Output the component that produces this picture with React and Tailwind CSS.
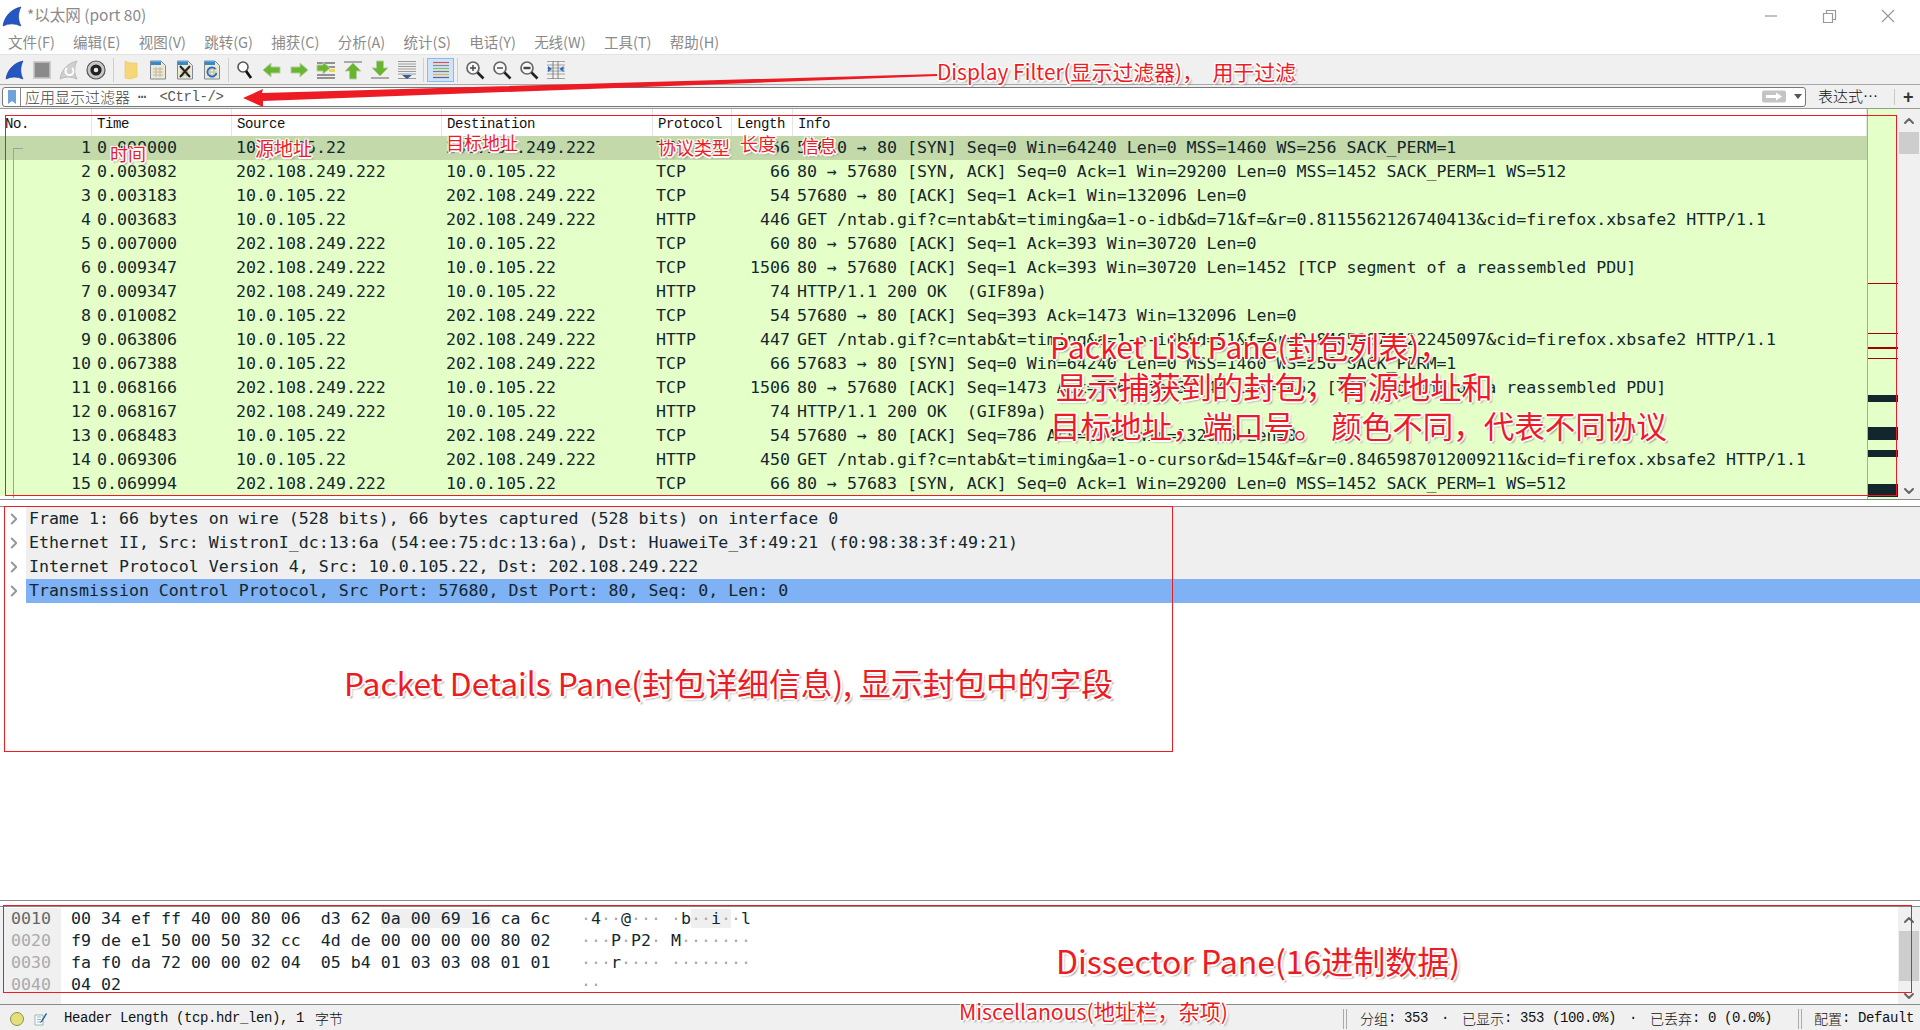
import { ChevronUp, ChevronDown, ChevronRight } from 'lucide-react';

const packets = [
  ['1', '0.000000', '10.0.105.22', '202.108.249.222', 'TCP', '66', '57680 → 80 [SYN] Seq=0 Win=64240 Len=0 MSS=1460 WS=256 SACK_PERM=1'],
  ['2', '0.003082', '202.108.249.222', '10.0.105.22', 'TCP', '66', '80 → 57680 [SYN, ACK] Seq=0 Ack=1 Win=29200 Len=0 MSS=1452 SACK_PERM=1 WS=512'],
  ['3', '0.003183', '10.0.105.22', '202.108.249.222', 'TCP', '54', '57680 → 80 [ACK] Seq=1 Ack=1 Win=132096 Len=0'],
  ['4', '0.003683', '10.0.105.22', '202.108.249.222', 'HTTP', '446', 'GET /ntab.gif?c=ntab&t=timing&a=1-o-idb&d=71&f=&r=0.8115562126740413&cid=firefox.xbsafe2 HTTP/1.1'],
  ['5', '0.007000', '202.108.249.222', '10.0.105.22', 'TCP', '60', '80 → 57680 [ACK] Seq=1 Ack=393 Win=30720 Len=0'],
  ['6', '0.009347', '202.108.249.222', '10.0.105.22', 'TCP', '1506', '80 → 57680 [ACK] Seq=1 Ack=393 Win=30720 Len=1452 [TCP segment of a reassembled PDU]'],
  ['7', '0.009347', '202.108.249.222', '10.0.105.22', 'HTTP', '74', 'HTTP/1.1 200 OK  (GIF89a)'],
  ['8', '0.010082', '10.0.105.22', '202.108.249.222', 'TCP', '54', '57680 → 80 [ACK] Seq=393 Ack=1473 Win=132096 Len=0'],
  ['9', '0.063806', '10.0.105.22', '202.108.249.222', 'HTTP', '447', 'GET /ntab.gif?c=ntab&t=timing&a=1-o-idb&d=51&f=&r=0.84659870122245097&cid=firefox.xbsafe2 HTTP/1.1'],
  ['10', '0.067388', '10.0.105.22', '202.108.249.222', 'TCP', '66', '57683 → 80 [SYN] Seq=0 Win=64240 Len=0 MSS=1460 WS=256 SACK_PERM=1'],
  ['11', '0.068166', '202.108.249.222', '10.0.105.22', 'TCP', '1506', '80 → 57680 [ACK] Seq=1473 Ack=786 Win=31744 Len=1452 [TCP segment of a reassembled PDU]'],
  ['12', '0.068167', '202.108.249.222', '10.0.105.22', 'HTTP', '74', 'HTTP/1.1 200 OK  (GIF89a)'],
  ['13', '0.068483', '10.0.105.22', '202.108.249.222', 'TCP', '54', '57680 → 80 [ACK] Seq=786 Ack=2945 Win=132096 Len=0'],
  ['14', '0.069306', '10.0.105.22', '202.108.249.222', 'HTTP', '450', 'GET /ntab.gif?c=ntab&t=timing&a=1-o-cursor&d=154&f=&r=0.8465987012009211&cid=firefox.xbsafe2 HTTP/1.1'],
  ['15', '0.069994', '202.108.249.222', '10.0.105.22', 'TCP', '66', '80 → 57683 [SYN, ACK] Seq=0 Ack=1 Win=29200 Len=0 MSS=1452 SACK_PERM=1 WS=512'],
];

const details = [
  'Frame 1: 66 bytes on wire (528 bits), 66 bytes captured (528 bits) on interface 0',
  'Ethernet II, Src: WistronI_dc:13:6a (54:ee:75:dc:13:6a), Dst: HuaweiTe_3f:49:21 (f0:98:38:3f:49:21)',
  'Internet Protocol Version 4, Src: 10.0.105.22, Dst: 202.108.249.222',
  'Transmission Control Protocol, Src Port: 57680, Dst Port: 80, Seq: 0, Len: 0',
];

const menus = ['文件(F)', '编辑(E)', '视图(V)', '跳转(G)', '捕获(C)', '分析(A)', '统计(S)', '电话(Y)', '无线(W)', '工具(T)', '帮助(H)'];

const MONO = "font-['DejaVu_Sans_Mono',monospace] text-[16.6px] text-[#12272e] whitespace-pre";
const SIMSUN = "font-['Liberation_Mono',monospace] text-[14px] tracking-[-0.4px] text-[#111] whitespace-pre";
const CJK = "font-['Noto_Sans_CJK_SC',sans-serif]";

function Fin({ fill = '#2456c4', dark = '#16348c' }) {
  return <path d="M1 19 C2 11 8 3 18 1 C15 7 15 13 18 19 Q9 15 1 19 Z" fill={fill} stroke={dark} strokeWidth="0.6" />;
}

function Doc({ children }) {
  return (
    <>
      <path d="M2.5 1 H13 L17.5 5.5 V19 H2.5 Z" fill="#efe9d4" stroke="#7d8a96" />
      <path d="M3 1.5 H13 V5 H3 Z" fill="#2f8ad0" />
      <path d="M5 9 H15 M5 12 H15 M5 15 H15 M8 7 V17 M12 7 V17" stroke="#b5ad92" strokeWidth="0.8" />
      {children}
    </>
  );
}

function Lens({ children }) {
  return (
    <>
      <circle cx="8" cy="8" r="6" fill="#f7f7f7" stroke="#666" strokeWidth="1.7" />
      <path d="M12.5 12.5 L18.5 18.5" stroke="#222" strokeWidth="2.6" />
      {children}
    </>
  );
}

function Arrow({ d }) {
  return <path d={d} fill="#68b52e" stroke="#b9c9a8" strokeWidth="1" />;
}

const toolIcons = {
  start: <Fin />,
  stop: <rect x="2" y="2" width="16" height="16" fill="#8a8a8a" stroke="#c4c4c4" strokeWidth="1.6" />,
  restart: (
    <>
      <Fin fill="#cfcfcf" dark="#a5a5a5" />
      <path d="M13 8 A4 4 0 1 1 8 8" fill="none" stroke="#fff" strokeWidth="2" />
    </>
  ),
  options: (
    <>
      <circle cx="10" cy="10" r="9" fill="#c8c8c8" stroke="#555" strokeWidth="1.2" />
      <circle cx="10" cy="10" r="5.6" fill="#222" />
      <circle cx="10" cy="10" r="2.3" fill="#e8e8e8" />
    </>
  ),
  folder: <path d="M4 1 L9 3 L16 3 V17 L9 19 L4 18 Z" fill="#f5d778" stroke="#e8c660" strokeWidth="0.6" />,
  file: <Doc />,
  close: (
    <Doc>
      <path d="M5 6 L15 17 M15 6 L5 17" stroke="#222" strokeWidth="2" />
    </Doc>
  ),
  reload: (
    <Doc>
      <path d="M13.5 9 A4.6 4.6 0 1 0 14.5 13" fill="none" stroke="#1f6fbe" strokeWidth="1.8" />
    </Doc>
  ),
  find: (
    <>
      <circle cx="8" cy="7" r="5" fill="#fff" stroke="#555" strokeWidth="1.6" />
      <path d="M11 11 L16 18" stroke="#111" strokeWidth="2.8" />
    </>
  ),
  back: <Arrow d="M1 10 L9 3 V7 H18 V13 H9 V17 Z" />,
  forward: <Arrow d="M19 10 L11 3 V7 H2 V13 H11 V17 Z" />,
  goto: (
    <>
      <path d="M1 3 H19 M9 7 H19 M1 15 H19 M1 18 H19" stroke="#333" strokeWidth="1.2" />
      <path d="M13 9 H19 V12 H13 Z" fill="#f1d64a" />
      <Arrow d="M14 8 L7 2 V5 H1 V11 H7 V14 Z" />
    </>
  ),
  top: (
    <>
      <path d="M1 2 H19" stroke="#999" strokeWidth="1.6" />
      <Arrow d="M10 3 L18 11 H13.5 V19 H6.5 V11 H2 Z" />
    </>
  ),
  bottom: (
    <>
      <path d="M1 18 H19" stroke="#999" strokeWidth="1.6" />
      <Arrow d="M10 16 L18 8 H13.5 V1 H6.5 V8 H2 Z" />
    </>
  ),
  autoscroll: (
    <>
      <path d="M1 1.5 H19 M1 4 H19 M1 6.5 H19 M1 9 H19 M1 11.5 H19 M1 14 H19 M1 18.5 H19" stroke="#8f8f8f" strokeWidth="0.9" />
      <path d="M5 15 H15 L10 19 Z" fill="#2f5f9e" />
    </>
  ),
  colorize: (
    <>
      <path d="M2 2.5 H18" stroke="#d9534f" strokeWidth="1.2" />
      <path d="M2 5.5 H18" stroke="#8b8b8b" strokeWidth="1.2" />
      <path d="M2 8.5 H18" stroke="#8cc152" strokeWidth="1.2" />
      <path d="M2 11.5 H18" stroke="#7a7a7a" strokeWidth="1.2" />
      <path d="M2 14.5 H18" stroke="#e0b93c" strokeWidth="1.2" />
      <path d="M2 17.5 H18" stroke="#6b5b95" strokeWidth="1.2" />
    </>
  ),
  zoomIn: (
    <Lens>
      <path d="M5 8 H11 M8 5 V11" stroke="#444" strokeWidth="1.4" />
    </Lens>
  ),
  zoomOut: (
    <Lens>
      <path d="M5 8 H11" stroke="#444" strokeWidth="1.4" />
    </Lens>
  ),
  zoom100: (
    <Lens>
      <path d="M4.5 8 H11.5" stroke="#444" strokeWidth="2.4" />
    </Lens>
  ),
  resize: (
    <>
      <path d="M1 1.5 H19 M1 5 H19 M1 8 H19 M1 11 H19 M1 14 H19 M1 18.5 H19" stroke="#9a9a9a" strokeWidth="0.9" />
      <path d="M7 1 V19 M12 1 V19" stroke="#777" strokeWidth="0.9" />
      <path d="M2 6 L6 9 L2 12 Z M17.5 6 L13.5 9 L17.5 12 Z" fill="#2f6fb8" />
    </>
  ),
};

function Tool({ name, active }) {
  return (
    <div className={`w-[27px] h-[24px] flex items-center justify-center shrink-0 ${active ? 'bg-[#cfe4f9] border border-[#84bcef]' : ''}`}>
      <svg viewBox="0 0 20 20" className="w-[20px] h-[20px]">{toolIcons[name]}</svg>
    </div>
  );
}

function Sep({ className }) {
  return <div className={`w-px h-[24px] bg-[#cfcfcf] shrink-0 ${className}`} />;
}

function Toolbar() {
  return (
    <div className="h-[30px] shrink-0 flex items-center pl-px bg-[#f0f0f0] border-b border-[#a8a8a8]">
      <Tool name="start" />
      <Tool name="stop" />
      <Tool name="restart" />
      <Tool name="options" />
      <Sep className="ml-[4px] mr-[3px]" />
      <Tool name="folder" />
      <Tool name="file" />
      <Tool name="close" />
      <Tool name="reload" />
      <Sep className="ml-[3px] mr-[2px]" />
      <Tool name="find" />
      <Tool name="back" />
      <Tool name="forward" />
      <Tool name="goto" />
      <Tool name="top" />
      <Tool name="bottom" />
      <Tool name="autoscroll" />
      <Sep className="ml-[3px] mr-[3px]" />
      <Tool name="colorize" active />
      <Sep className="ml-[3px] mr-[3px]" />
      <Tool name="zoomIn" />
      <Tool name="zoomOut" />
      <Tool name="zoom100" />
      <Tool name="resize" />
    </div>
  );
}

function FilterBar() {
  return (
    <div className="h-[24px] shrink-0 flex items-center bg-[#f0f0f0] border-b border-[#9a9a9a]">
      <div className="ml-[2px] w-[1804px] h-[20px] flex items-center bg-white border border-[#777] rounded-[3px]">
        <div className="w-[18px] h-full flex items-center justify-center border-r border-[#888]">
          <svg viewBox="0 0 8 14" className="w-[8px] h-[14px]">
            <path d="M0 0 H8 V14 L4 11 L0 14 Z" fill="#6ea2d8" />
          </svg>
        </div>
        <span className={`ml-[4px] pt-px text-[15px] font-light text-[#444] ${CJK}`}>应用显示过滤器</span>
        <span className="ml-[8px] pt-px font-['Liberation_Mono',monospace] text-[14px] text-[#555]">⋯</span>
        <span className="ml-[13px] pt-px font-['Liberation_Mono',monospace] text-[14px] tracking-[-0.4px] text-[#555] whitespace-pre">{'<Ctrl-/>'}</span>
        <svg viewBox="0 0 24 12" className="ml-auto mr-[8px] w-[24px] h-[13px]">
          <rect width="24" height="12" rx="2" fill="#c4c4c4" />
          <path d="M4 4.5 H14 V2 L20 6 L14 10 V7.5 H4 Z" fill="#fff" />
        </svg>
        <svg viewBox="0 0 8 5" className="mr-[3px] w-[8px] h-[5px]">
          <path d="M0 0 H8 L4 5 Z" fill="#555" />
        </svg>
      </div>
      <span className={`ml-[12px] text-[15px] font-light text-[#111] whitespace-pre ${CJK}`}>表达式⋯</span>
      <div className="ml-[16px] w-px h-[16px] bg-[#c8c8c8]" />
      <span className="ml-[8px] font-['Liberation_Sans',sans-serif] text-[18px] font-bold leading-none text-[#333]">+</span>
    </div>
  );
}

const LIST_COLS = 'grid grid-cols-[92px_140px_210px_211px_79px_61px_1fr]';

function PacketHeader() {
  const heads = ['No.', 'Time', 'Source', 'Destination', 'Protocol', 'Length', 'Info'];
  return (
    <div className={`${LIST_COLS} h-[27px] items-center bg-white`}>
      {heads.map((h) => (
        <div key={h} className={`h-full flex items-center pt-[3px] pl-[5px] border-r border-[#e5e5e5] ${SIMSUN}`}>{h}</div>
      ))}
    </div>
  );
}

function PacketRow({ row, selected }) {
  return (
    <div className={`${LIST_COLS} h-[24px] items-center overflow-hidden ${MONO} ${selected ? 'bg-[#c3d9a9]' : 'bg-[#e4ffc7]'}`}>
      <div className="text-right pr-px">{row[0]}</div>
      <div className="pl-[5px]">{row[1]}</div>
      <div className="pl-[4px]">{row[2]}</div>
      <div className="pl-[4px]">{row[3]}</div>
      <div className="pl-[3px]">{row[4]}</div>
      <div className="text-right pr-[3px] -ml-[20px]">{row[5]}</div>
      <div className="pl-[4px]">{row[6]}</div>
    </div>
  );
}

function Minimap() {
  return (
    <div className="w-[31px] shrink-0 flex flex-col bg-[#e4ffc7] border-l border-[#aaa]">
      <div className="h-[175px] shrink-0 border-b border-[#a50000]" />
      <div className="h-[50px] shrink-0 border-b border-[#a50000]" />
      <div className="h-[15px] shrink-0 border-b-2 border-[#a50000]" />
      <div className="h-[10px] shrink-0 border-b border-[#a50000]" />
      <div className="h-[36px] shrink-0" />
      <div className="h-[7px] shrink-0 bg-[#12262e]" />
      <div className="h-[25px] shrink-0" />
      <div className="h-[13px] shrink-0 bg-[#12262e]" />
      <div className="h-[10px] shrink-0" />
      <div className="h-[7px] shrink-0 bg-[#12262e]" />
      <div className="h-[27px] shrink-0" />
      <div className="h-[13px] shrink-0 bg-[#12262e]" />
    </div>
  );
}

function Scrollbar({ thumbClass, arrowClass }) {
  return (
    <div className="w-[22px] shrink-0 flex flex-col items-center bg-[#f0f0f0]">
      <ChevronUp size={16} strokeWidth={3} className={`text-[#666] shrink-0 ${arrowClass}`} />
      <div className={`w-[20px] bg-[#cdcdcd] shrink-0 ${thumbClass}`} />
      <div className="flex-1" />
      <ChevronDown size={16} strokeWidth={3} className="text-[#666] shrink-0" />
    </div>
  );
}

function PacketList() {
  return (
    <div className="relative h-[391px] shrink-0 flex border-b border-[#8a8a8a] bg-white">
      <div className="flex-1 min-w-0 overflow-hidden">
        <PacketHeader />
        {packets.map((row, i) => (
          <PacketRow key={row[0]} row={row} selected={i === 0} />
        ))}
      </div>
      <Minimap />
      <Scrollbar thumbClass="h-[22px]" arrowClass="mt-[4px] mb-[3px]" />
      <div className="absolute left-[13px] top-[39px] w-[10px] h-[350px] border-l border-t border-[#9aa3a8]" />
    </div>
  );
}

function DetailsPane() {
  return (
    <div className="h-[395px] shrink-0 mt-[6px] bg-white border-t border-b border-[#8a8a8a]">
      {details.map((text, i) => (
        <div key={text} className="h-[24px] flex items-center">
          <div className="w-[26px] shrink-0 flex justify-center pl-[1px] bg-white">
            <ChevronRight size={18} strokeWidth={2.6} className="text-[#999]" />
          </div>
          <div className={`flex-1 h-full flex items-center pl-[3px] pt-px ${MONO} ${i === 3 ? 'bg-[#7fb2f5]' : 'bg-[#efefef]'}`}>{text}</div>
        </div>
      ))}
    </div>
  );
}

function Ascii({ text }) {
  return [...text].map((c, i) => (
    <span key={i} className={c === '·' ? 'text-[#a8a8a8]' : ''}>{c}</span>
  ));
}

function HexRow({ offset, dim, children, ascii }) {
  return (
    <div className="h-[22px] flex items-center">
      <div className={`w-[61px] h-full shrink-0 flex items-center pl-[11px] bg-[#f0f0f0] ${MONO} ${dim ? '!text-[#aaa]' : '!text-[#666]'}`}>{offset}</div>
      <div className={`w-[520px] shrink-0 pl-[10px] ${MONO}`}>{children}</div>
      <div className={MONO}>{ascii}</div>
    </div>
  );
}

function HexPane() {
  const hl = 'bg-[#efefef]';
  return (
    <div className="h-[99px] shrink-0 mt-[5px] flex bg-white border-t border-b border-[#8a8a8a]">
      <div className="flex-1 flex flex-col">
        <div className="flex flex-col pt-[1px]">
          <HexRow
            offset="0010"
            ascii={
              <>
                <Ascii text="·4··@··· ·b" />
                <span className={hl}><Ascii text="··i·" /></span>
                <Ascii text="·l" />
              </>
            }
          >
            00 34 ef ff 40 00 80 06  d3 62 <span className={hl}>0a 00 69 16</span> ca 6c
          </HexRow>
          <HexRow offset="0020" dim ascii={<Ascii text="···P·P2· M·······" />}>f9 de e1 50 00 50 32 cc  4d de 00 00 00 00 80 02</HexRow>
          <HexRow offset="0030" dim ascii={<Ascii text="···r···· ········" />}>fa f0 da 72 00 00 02 04  05 b4 01 03 03 08 01 01</HexRow>
          <HexRow offset="0040" dim ascii={<Ascii text="··" />}>04 02</HexRow>
        </div>
        <div className="flex-1 w-[61px] bg-[#f0f0f0]" />
      </div>
      <Scrollbar thumbClass="h-[50px]" arrowClass="mt-[5px] mb-[3px]" />
    </div>
  );
}

function StatusBar() {
  return (
    <div className="flex-1 flex items-center pt-[2px] bg-[#f0f0f0]">
      <div className="ml-[10px] w-[14px] h-[14px] rounded-full bg-[#e3e07a] border border-[#8f8f50]" />
      <svg viewBox="0 0 14 14" className="ml-[10px] w-[14px] h-[14px]">
        <path d="M1 3 H9 V13 H1 Z" fill="#fff" stroke="#7aa" strokeWidth="0.8" />
        <path d="M3 5 H7 M3 7.5 H7 M3 10 H7" stroke="#89a" strokeWidth="0.8" />
        <path d="M12 1 L7 9 L6 11 L8 10 L13 2 Z" fill="#1f5f9e" />
      </svg>
      <span className={`ml-[16px] ${SIMSUN}`}>Header Length (tcp.hdr_len), 1</span>
      <span className={`ml-[11px] text-[14px] font-light text-[#111] ${CJK}`}>字节</span>
      <div className="ml-auto w-[4px] h-[20px] border-x border-[#aaa]" />
      <div className={`ml-[13px] w-[438px] flex items-center text-[14px] font-light text-[#111] ${CJK}`}>
        <span>分组</span>
        <span className={SIMSUN}>: 353</span>
        <span className={`ml-[13px] mr-[13px] ${SIMSUN}`}>·</span>
        <span>已显示</span>
        <span className={SIMSUN}>: 353 (100.0%)</span>
        <span className={`ml-[13px] mr-[13px] ${SIMSUN}`}>·</span>
        <span>已丢弃</span>
        <span className={SIMSUN}>: 0 (0.0%)</span>
      </div>
      <div className="w-[4px] h-[20px] border-x border-[#aaa]" />
      <div className={`ml-[12px] mr-[6px] flex items-center text-[14px] font-light text-[#111] ${CJK}`}>
        <span>配置</span>
        <span className={SIMSUN}>: Default</span>
      </div>
    </div>
  );
}

const NOTE = `absolute whitespace-pre leading-none text-[#ed1c24] ${CJK} [text-shadow:1px_1px_0_#fff,-1px_-1px_0_#fff,1px_-1px_0_#fff,-1px_1px_0_#fff,2px_0_0_#fff,0_2px_0_#fff,2px_2px_2px_#8f8f8f]`;

function Annotations() {
  return (
    <>
      <svg viewBox="0 0 1920 1030" className="absolute inset-0 w-[1920px] h-[1030px] pointer-events-none">
        <polygon points="243,98 263,89 262,93 937,74 937,76 263,101 263,107" fill="#ed1c24" />
      </svg>
      <div className="absolute left-[5px] top-[115px] w-[1892px] h-[381px] border border-[#ed1c24]" />
      <div className="absolute left-[4px] top-[506px] w-[1169px] h-[246px] border border-[#ed1c24]" />
      <div className="absolute left-[3px] top-[905px] w-[1909px] h-[88px] border border-[#ed1c24]" />
      <div className={`${NOTE} left-[937px] top-[61px] text-[20.9px]`}>Display Filter(显示过滤器)，  用于过滤</div>
      <div className={`${NOTE} left-[110px] top-[144px] text-[18px]`}>时间</div>
      <div className={`${NOTE} left-[255px] top-[138px] text-[19px]`}>源地址</div>
      <div className={`${NOTE} left-[446px] top-[133px] text-[18px]`}>目标地址</div>
      <div className={`${NOTE} left-[658px] top-[138px] text-[18px]`}>协议类型</div>
      <div className={`${NOTE} left-[740px] top-[134px] text-[18px]`}>长度</div>
      <div className={`${NOTE} left-[801px] top-[136px] text-[18px]`}>信息</div>
      <div className={`${NOTE} left-[1050px] top-[331px] text-[30.3px]`}>Packet List Pane(封包列表)，</div>
      <div className={`${NOTE} left-[1056px] top-[370px] text-[31.2px]`}>显示捕获到的封包，有源地址和</div>
      <div className={`${NOTE} left-[1050px] top-[410px] text-[30.5px]`}>目标地址，端口号。 颜色不同，代表不同协议</div>
      <div className={`${NOTE} left-[344px] top-[667px] text-[31.75px]`}>Packet Details Pane(封包详细信息), 显示封包中的字段</div>
      <div className={`${NOTE} left-[1056px] top-[944px] text-[32px]`}>Dissector Pane(16进制数据)</div>
      <div className={`${NOTE} left-[959px] top-[1000px] text-[21.2px]`}>Miscellanous(地址栏，杂项)</div>
    </>
  );
}

export default function App() {
  return (
    <div className="relative w-[1920px] h-[1030px] overflow-hidden flex flex-col bg-white">
      <div className="h-[32px] shrink-0 flex items-center">
        <svg viewBox="0 0 20 20" className="ml-[2px] w-[21px] h-[21px]">
          <Fin />
        </svg>
        <span className={`ml-[4px] pb-[2px] text-[15.5px] text-[#8a8a8a] ${CJK}`}>*以太网 (port 80)</span>
        <svg viewBox="0 0 130 14" className="ml-auto mr-[25px] w-[130px] h-[14px]">
          <path d="M0 7 H12" stroke="#999" strokeWidth="1.2" />
          <path d="M58.5 4.5 H67.5 V13.5 H58.5 Z M61.5 4.5 V1.5 H70.5 V10.5 H67.5" fill="none" stroke="#999" strokeWidth="1.2" />
          <path d="M117 1 L129 13 M129 1 L117 13" stroke="#999" strokeWidth="1.2" />
        </svg>
      </div>
      <div className={`h-[23px] shrink-0 flex items-center gap-[18.3px] pl-[8px] pb-[3px] border-b border-[#e4e4e4] text-[14.5px] text-[#8a8a8a] ${CJK}`}>
        {menus.map((m) => (
          <span key={m}>{m}</span>
        ))}
      </div>
      <Toolbar />
      <FilterBar />
      <PacketList />
      <DetailsPane />
      <HexPane />
      <StatusBar />
      <Annotations />
    </div>
  );
}
